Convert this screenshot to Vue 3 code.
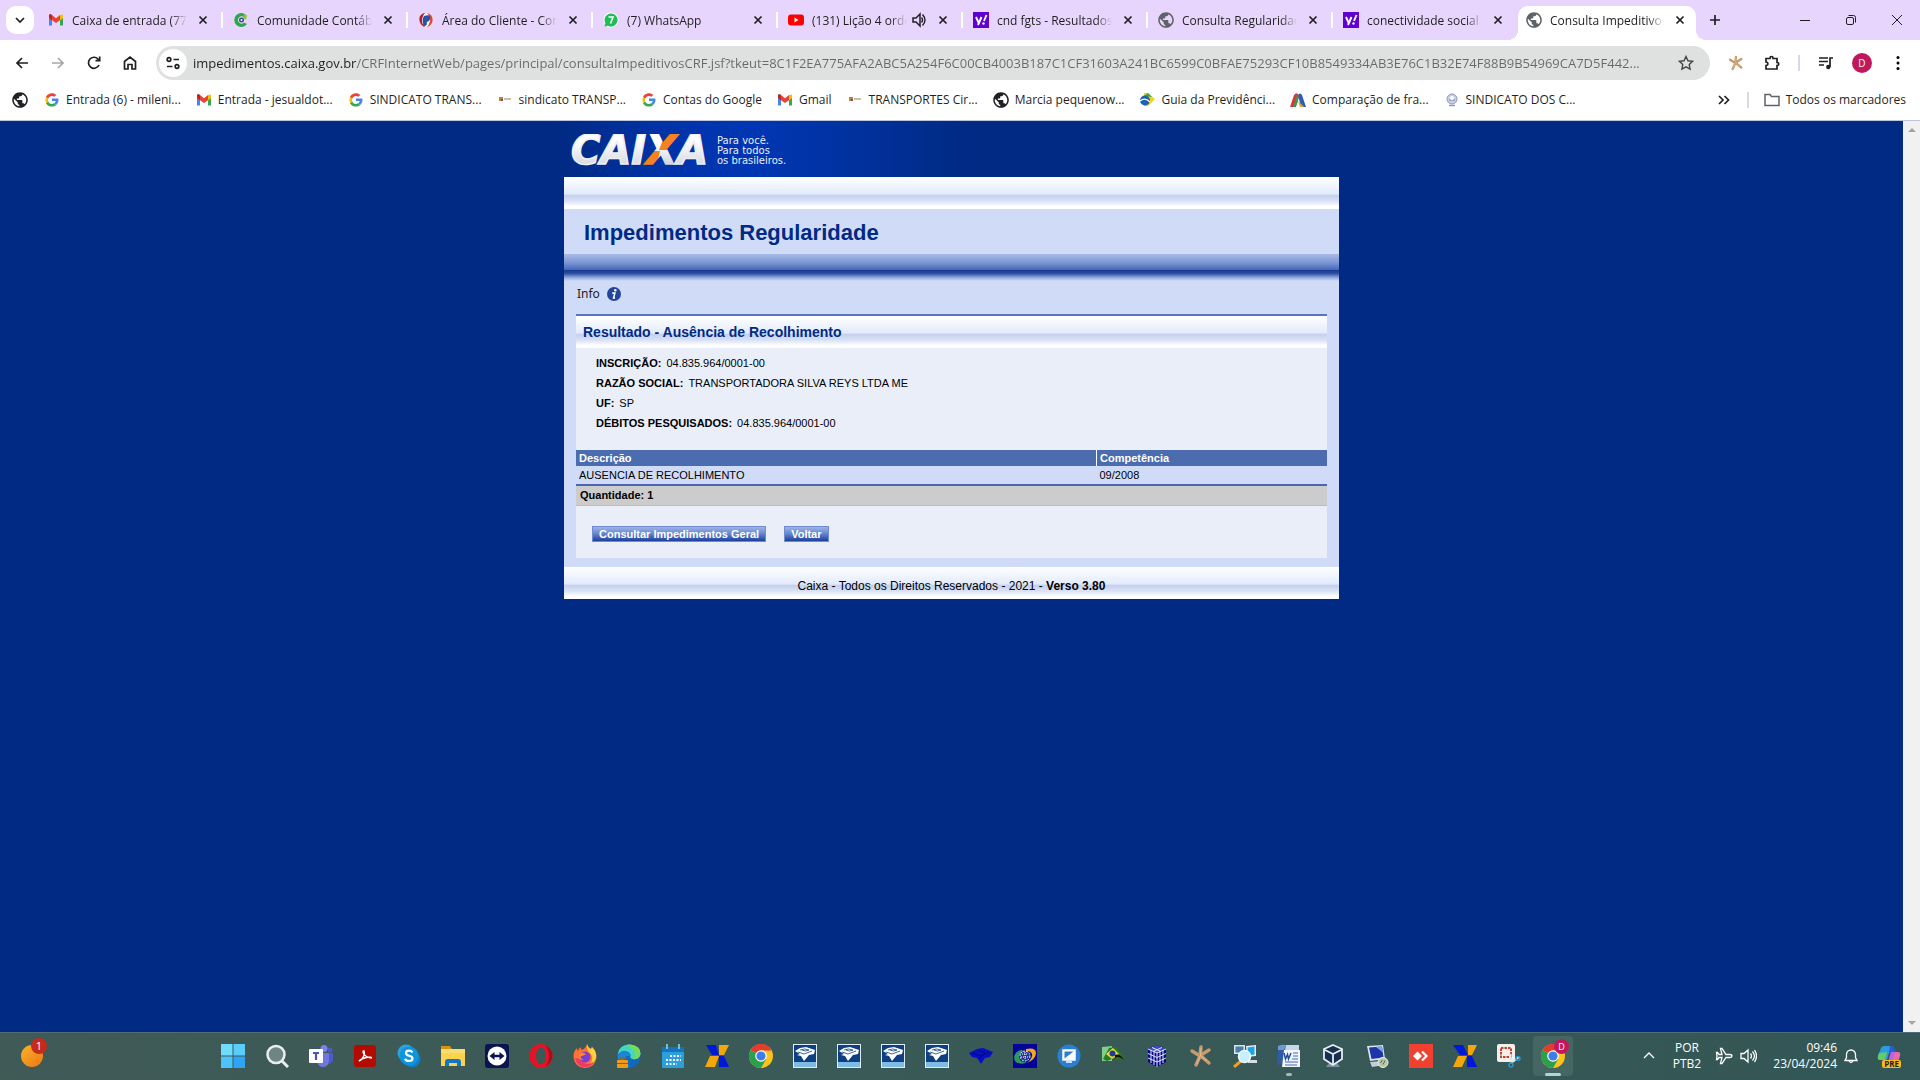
<template>
  <div class="desktop">
    <header class="browser">
      <div class="tab-strip">
        <button class="tab-search" aria-label="Pesquisar guias">
          <svg viewBox="0 0 16 16" width="16" height="16"><path d="M4 6l4 4 4-4" class="stroke" /></svg>
        </button>
        <div v-for="(tab, i) in tabs" :key="i" class="tab" :class="{ active: tab.active, last: i === 7 }">
          <svg class="favicon" viewBox="0 0 16 16" v-html="icons[tab.icon]"></svg>
          <span class="tab-title">{{ tab.title }}</span>
          <svg v-if="tab.audio" class="audio" viewBox="0 0 16 16">
            <path d="M2 6h3l4-4v12L5 10H2z" fill="none" stroke="#202124" stroke-width="1.500" />
            <path d="M10.500 5.500q2 2.500 0 5M11.500 2.500q5 5.500 0 11" fill="none" stroke="#202124" stroke-width="1.400" />
          </svg>
          <button class="tab-close" aria-label="Fechar">
            <svg viewBox="0 0 16 16" width="16" height="16"><path d="M4.500 4.500l7 7M11.500 4.500l-7 7" class="stroke" /></svg>
          </button>
        </div>
        <button class="new-tab" aria-label="Nova guia">
          <svg viewBox="0 0 16 16" width="16" height="16"><path d="M8 3v10M3 8h10" class="stroke" /></svg>
        </button>
        <div class="window-controls">
          <button aria-label="Minimizar"><svg viewBox="0 0 12 12"><path d="M1 6.500h10" class="thin" /></svg></button>
          <button aria-label="Restaurar">
            <svg viewBox="0 0 12 12"><rect x="1.500" y="3.500" width="7" height="7" rx="1.500" class="thin" /><path d="M3.500 1.500h5q2 0 2 2v5" class="thin" /></svg>
          </button>
          <button aria-label="Fechar janela"><svg viewBox="0 0 12 12"><path d="M1 1l10 10M11 1L1 11" class="thin" /></svg></button>
        </div>
      </div>

      <div class="toolbar">
        <button class="tool" aria-label="Voltar página"><svg viewBox="0 0 16 16"><path d="M14 8H3M8 3L3 8l5 5" class="stroke" /></svg></button>
        <button class="tool muted" aria-label="Avançar"><svg viewBox="0 0 16 16"><path d="M2 8h11M8 3l5 5-5 5" class="stroke" /></svg></button>
        <button class="tool" aria-label="Recarregar"><svg viewBox="0 0 16 16"><path d="M13 10a5.500 5.500 0 1 1-1-6l1.500 1.500M13.700 1.500v4.200H9.500" class="stroke" /></svg></button>
        <button class="tool" aria-label="Página inicial"><svg viewBox="0 0 16 16"><path d="M2.500 6.500L8 2l5.500 4.500V14H10V9.500H6V14H2.500z" class="stroke" /></svg></button>
        <div class="omnibox">
          <button class="site-info" aria-label="Informações do site">
            <svg viewBox="0 0 16 16" width="16" height="16">
              <circle cx="4" cy="4.500" r="1.800" class="stroke" /><path d="M8.500 4.500H14M2 11.500h5.500" class="stroke" /><circle cx="12" cy="11.500" r="1.800" class="stroke" />
            </svg>
          </button>
          <input v-model="url" class="url" type="text" aria-label="Barra de endereço" spellcheck="false" />
          <button class="star" aria-label="Favoritar">
            <svg viewBox="0 0 16 16" width="16" height="16"><path d="M8 1.500l2 4.300 4.600.500-3.400 3.200.900 4.700L8 11.900l-4.100 2.300.900-4.700L1.400 6.300 6 5.800z" fill="none" stroke="#444746" stroke-width="1.400" /></svg>
          </button>
        </div>
        <div class="extensions">
          <svg viewBox="0 0 24 24" width="20" height="16" v-html="icons.starfish"></svg>
          <button class="tool" aria-label="Extensões"><svg viewBox="0 0 16 16"><path d="M2 3.500h4V3a1.500 1.500 0 0 1 3 0v.5h4v4h.2a1.500 1.500 0 0 1 0 3H13V14H2v-3.500c2.500 0 2.500-3.500 0-3.500z" class="stroke" /></svg></button>
          <i class="divider"></i>
          <button class="tool" aria-label="Mídia"><svg viewBox="0 0 16 16"><path d="M1 3h9M1 6.500h9M1 10h5M12 12V3h3" class="stroke" /><circle cx="10.300" cy="12" r="2.200" fill="#202124" /></svg></button>
          <button class="avatar">D</button>
          <button class="tool" aria-label="Menu"><svg viewBox="0 0 16 16"><circle cx="8" cy="2.500" r="1.500" /><circle cx="8" cy="8" r="1.500" /><circle cx="8" cy="13.500" r="1.500" /></svg></button>
        </div>
      </div>

      <nav class="bookmarks">
        <a v-for="(mark, i) in bookmarks" :key="i" href="#" class="bookmark">
          <svg class="favicon" viewBox="0 0 16 16" v-html="icons[mark.icon]"></svg>
          <span v-if="mark.title">{{ mark.title }}</span>
        </a>
        <div class="bookmarks-end">
          <svg viewBox="0 0 16 16" width="16" height="16"><path d="M3 4l4 4-4 4M8.500 4l4 4-4 4" class="stroke" /></svg>
          <i class="divider"></i>
          <a href="#" class="bookmark">
            <svg class="favicon" viewBox="0 0 16 16"><path d="M1 2.500h5l1.500 2H15v9H1z" fill="none" stroke="#5f6368" stroke-width="1.500" /></svg>
            <span>Todos os marcadores</span>
          </a>
        </div>
      </nav>
    </header>

    <div class="viewport">
      <main class="page">
        <div class="brand">
          <svg class="logo" viewBox="0 0 142 34" width="142" height="34" role="img" aria-label="CAIXA">
            <defs>
              <linearGradient id="silver" x1="0" y1="0" x2="0" y2="1">
                <stop offset="0.300" stop-color="#fff" /><stop offset="1" stop-color="#c9cdd6" />
              </linearGradient>
              <!-- the X has its rising stroke in orange -->
              <pattern id="cross" width="142" height="34" patternUnits="userSpaceOnUse">
                <rect width="142" height="34" fill="url(#silver)" />
                <path d="M95 0h30v16H89zM60 17h30L86 34H60z" fill="#f58220" />
              </pattern>
            </defs>
            <text x="1" y="30" class="wordmark">CAI<tspan class="cross">X</tspan>A</text>
          </svg>
          <p class="slogan">Para você.<br />Para todos<br />os brasileiros.</p>
        </div>

        <div class="card">
          <div class="gloss"></div>
          <h1>Impedimentos Regularidade</h1>
          <div class="bar"></div>

          <div class="info">
            <span>Info</span>
            <svg viewBox="0 0 16 16" width="14" height="14">
              <circle cx="8" cy="8" r="8" fill="#23459b" /><circle cx="9.500" cy="3.800" r="1.400" fill="#fff" />
              <path d="M6 7h3l-1.500 5.500h1.700" fill="none" stroke="#fff" stroke-width="1.800" />
            </svg>
          </div>

          <section class="result">
            <h2 class="gloss">Resultado - Ausência de Recolhimento</h2>
            <dl>
              <div v-for="field in fields" :key="field.label">
                <dt>{{ field.label }}:</dt>
                <dd>{{ field.value }}</dd>
              </div>
            </dl>
            <table>
              <thead>
                <tr><th>Descrição</th><th class="period">Competência</th></tr>
              </thead>
              <tbody>
                <tr v-for="row in rows" :key="row.period"><td>{{ row.description }}</td><td>{{ row.period }}</td></tr>
              </tbody>
              <tfoot>
                <tr><td colspan="2">Quantidade: {{ rows.length }}</td></tr>
              </tfoot>
            </table>
            <div class="actions">
              <button>Consultar Impedimentos Geral</button>
              <button>Voltar</button>
            </div>
          </section>

          <footer class="gloss">Caixa - Todos os Direitos Reservados - 2021 -&nbsp;<b>Verso 3.80</b></footer>
        </div>
      </main>
      <div class="scrollbar">
        <svg viewBox="0 0 8 8" width="8" height="8"><path d="M0 6l4-4 4 4z" fill="#a3a3a3" /></svg>
        <svg viewBox="0 0 8 8" width="8" height="8"><path d="M0 2l4 4 4-4z" fill="#a3a3a3" /></svg>
      </div>
    </div>

    <div class="taskbar">
      <button class="weather" aria-label="Clima">
        <svg viewBox="0 0 24 24" width="24" height="24"><circle cx="12" cy="12" r="11" fill="url(#sun)" /><defs><linearGradient id="sun" x1="0" y1="0" x2="1" y2="1"><stop offset="0" stop-color="#f9b527" /><stop offset="1" stop-color="#ee7418" /></linearGradient></defs></svg>
        <span class="badge">1</span>
      </button>
      <div class="apps">
        <button v-for="(app, i) in apps" :key="i" class="app" :class="{ running: i === 24, current: i === apps.length - 1 }" :aria-label="app">
          <svg viewBox="0 0 24 24" width="24" height="24" v-html="icons[app]"></svg>
          <span v-if="i === apps.length - 1" class="profile">D</span>
        </button>
      </div>
      <div class="tray">
        <svg viewBox="0 0 16 16" width="16" height="16"><path d="M3 10l5-5 5 5" class="light" /></svg>
        <span class="language">POR<br />PTB2</span>
        <svg viewBox="0 0 18 18" width="18" height="18"><path d="M17 9q0-1.500-2-1.500h-4L7 1.500H5.500L7 7.500H4L2.500 5.500h-1L2 9l-.500 3.500h1L4 10.500h3L5.500 16.500H7l4-6h4q2 0 2-1.500z" class="light" /></svg>
        <svg viewBox="0 0 18 18" width="18" height="18"><path d="M2 6.500h3l4-3.500v12l-4-3.500H2zM11.500 6.500q2 2.500 0 5M13.500 4.500q4 4.500 0 9M15.500 3q4 6 0 12" class="light" /></svg>
        <time>09:46<br />23/04/2024</time>
        <svg viewBox="0 0 16 16" width="16" height="16"><path d="M2 12.500h12l-1.500-3V6.500a4.500 4.500 0 0 0-9 0v3zM6 13q2 3 4 0" class="light" /></svg>
        <div class="copilot">
          <svg viewBox="0 0 24 24" width="24" height="24" v-html="icons.copilot"></svg>
          <span>PRE</span>
        </div>
      </div>
    </div>
  </div>
</template>

<script setup>
import { ref } from 'vue'

const url = ref(
  'impedimentos.caixa.gov.br/CRFInternetWeb/pages/principal/consultaImpeditivosCRF.jsf?tkeut=8C1F2EA775AFA2ABC5A254F6C00CB4003B187C1CF31603A241BC6599C0BFAE75293CF10B8549334AB3E76C1B32E74F88B9B54969CA7D5F442...'
)

const tabs = [
  { icon: 'gmail', title: 'Caixa de entrada (77' },
  { icon: 'contabil', title: 'Comunidade Contábi' },
  { icon: 'cliente', title: 'Área do Cliente - Con' },
  { icon: 'whatsapp', title: '(7) WhatsApp' },
  { icon: 'youtube', title: '(131) Lição 4 orde', audio: true },
  { icon: 'yahoo', title: 'cnd fgts - Resultados' },
  { icon: 'globeGrey', title: 'Consulta Regularidad' },
  { icon: 'yahoo', title: 'conectividade social' },
  { icon: 'globeGrey', title: 'Consulta Impeditivos', active: true }
]

const bookmarks = [
  { icon: 'globe' },
  { icon: 'google', title: 'Entrada (6) - mileni...' },
  { icon: 'gmail', title: 'Entrada - jesualdot...' },
  { icon: 'google', title: 'SINDICATO TRANS...' },
  { icon: 'strip', title: 'sindicato TRANSP...' },
  { icon: 'google', title: 'Contas do Google' },
  { icon: 'gmail', title: 'Gmail' },
  { icon: 'strip', title: 'TRANSPORTES Cir...' },
  { icon: 'globe', title: 'Marcia pequenow...' },
  { icon: 'guia', title: 'Guia da Previdênci...' },
  { icon: 'compare', title: 'Comparação de fra...' },
  { icon: 'union', title: 'SINDICATO DOS C...' }
]

const fields = [
  { label: 'INSCRIÇÃO', value: '04.835.964/0001-00' },
  { label: 'RAZÃO SOCIAL', value: 'TRANSPORTADORA SILVA REYS LTDA ME' },
  { label: 'UF', value: 'SP' },
  { label: 'DÉBITOS PESQUISADOS', value: '04.835.964/0001-00' }
]

const rows = [{ description: 'AUSENCIA DE RECOLHIMENTO', period: '09/2008' }]

const apps = [
  'windows', 'search', 'teams', 'acrobat', 'skype', 'folder', 'teamviewer', 'opera', 'firefox', 'edge',
  'calendar', 'caixa', 'chrome', 'receita', 'receita', 'receita', 'receita', 'eagle', 'sped', 'remote',
  'brazil', 'cube', 'starfish', 'network', 'word', 'virtualbox', 'putty', 'anydesk', 'caixaAlt', 'snip', 'chrome'
]

const globePath = (color) =>
  `<path transform="scale(.78) translate(-1.700 -1.700)" fill="${color}" d="M12 2C6.480 2 2 6.480 2 12s4.480 10 10 10 10-4.480 10-10S17.520 2 12 2zm-1 17.930c-3.950-.490-7-3.850-7-7.930 0-.620.080-1.210.210-1.790L9 15v1c0 1.100.900 2 2 2v1.930zm6.900-2.540c-.260-.810-1-1.390-1.900-1.390h-1v-3c0-.550-.450-1-1-1H8v-2h2c.550 0 1-.450 1-1V7h2c1.100 0 2-.900 2-2v-.410c2.930 1.190 5 4.060 5 7.410 0 2.080-.800 3.970-2.100 5.390z"/>`

const icons = {
  gmail:
    '<path d="M1 3.500v10h3V7z" fill="#4285f4"/><path d="M15 3.500v10h-3V7z" fill="#34a853"/><path d="M12 3l3-.500V6l-3 2.500z" fill="#fbbc04"/><path d="M4 3l4 3.200L12 3v5.200L8 11 4 8.200z" fill="#ea4335"/><path d="M1 3q1-2 3 0v5.200L1 6z" fill="#c5221f"/>',
  google:
    '<path d="M8 6.600h6.400q.600 4-2.200 6.300l-2.100-1.600q1.400-1 1.700-2.200H8z" fill="#4285f4"/><path d="M12.200 12.900C9 15.800 4 14.800 2 11.200L4.200 9.500c1.100 2.600 3.700 3.100 5.900 1.800z" fill="#34a853"/><path d="M2 11.200Q.700 8 2 4.900L4.200 6.600q-.500 1.400 0 2.900z" fill="#fbbc05"/><path d="M2 4.900C4 1 9 .200 12.300 2.900L10.400 4.800C8 3.300 5.200 4 4.200 6.600z" fill="#ea4335"/>',
  contabil:
    '<path d="M14 4a7 7 0 1 0 0 8l-3-1.500a3.500 3.500 0 1 1 0-5z" fill="#2ba84a"/><path d="M14 4L11 2l-1 4 3 2z" fill="#8cc63f"/><circle cx="8.500" cy="8" r="2.500" fill="#3b4a9b"/><circle cx="8.500" cy="8" r="1" fill="#fff"/>',
  cliente:
    '<circle cx="8" cy="8" r="6.500" fill="#fff"/><path d="M7 1C-1 2 0 13 7 15 3 11 3 6 7 1z" fill="#b3202a"/><path d="M9 1c8 2 7 12 0 14 4-5 4-10 0-14z" fill="#e8482a"/><path d="M6 4c6-2 8 1 5 5-2 1-3 1-2 3 0 1-3 3-4 2 1-4-2-5 1-10z" fill="#2355a8"/>',
  whatsapp:
    '<circle cx="8" cy="8" r="7.500" fill="#fff"/><path d="M8 1.500a6.500 6.500 0 1 1-3 12.200L1.500 14.500l.900-3.300A6.500 6.500 0 0 1 8 1.500z" fill="#1fbd55"/><path d="M5.500 5H10L7.500 11.500" fill="none" stroke="#fff" stroke-width="1.600"/>',
  youtube: '<rect x="0" y="2.500" width="16" height="11" rx="3" fill="#f00"/><path d="M6.500 5.500v5l4-2.500z" fill="#fff"/>',
  yahoo:
    '<rect width="16" height="16" fill="#5f01d1"/><path d="M3 5l2.500 5.500M8.500 5l-3.500 8M11 9l2.500-6" fill="none" stroke="#fff" stroke-width="1.900"/><circle cx="10.500" cy="11.500" r="1.200" fill="#fff"/>',
  globe: globePath('#202124'),
  globeGrey: globePath('#5f6368'),
  strip: '<path d="M2 5h4v4H2z" fill="#b8862e"/><path d="M4 7h2v2H4z" fill="#7a4a7a"/><path d="M7 6h7v2H7z" fill="#cbbcb4"/>',
  guia: '<path d="M5 1h4l7 6-7 7H5z" fill="#f2d21b"/><path d="M5 4l4-3 4 4z" fill="#3aa648"/><circle cx="6" cy="8.500" r="5" fill="#1e63b0"/><path d="M1 9q5-4 10 1" fill="none" stroke="#fff" stroke-width="1.200"/>',
  compare:
    '<path d="M0 15L4 3q3-4 5 1L6 15z" fill="#d83a3a"/><path d="M3 15L7 4l2 1-2 7-2 3z" fill="#2e9e5b"/><path d="M8 3q2-3 4 0l4 12h-5z" fill="#2e5fb0"/><path d="M8 9l2 6h4z" fill="#e9a13b"/>',
  union: '<circle cx="8" cy="7" r="5" fill="#c9cfe6" stroke="#8f98c0"/><path d="M5 13.500h6M5 8h6" stroke="#8f98c0" stroke-width="1.500"/><circle cx="8" cy="6" r="2" fill="#fff"/>',

  windows: '<path d="M0 0h11.500v11.500H0z" fill="#6fdcff"/><path d="M12.500 0H24v11.500H12.500z" fill="#5bcdfb"/><path d="M0 12.500h11.500V24H0z" fill="#4cc3fa"/><path d="M12.500 12.500H24V24H12.500z" fill="#2fa4f3"/>',
  search: '<circle cx="11" cy="10.500" r="8.500" fill="#6f8583" stroke="#e9eeee" stroke-width="2.500"/><path d="M17 17l6 6" stroke="#e9eeee" stroke-width="3"/>',
  teams:
    '<circle cx="15" cy="4.500" r="3.500" fill="#7b83eb"/><circle cx="21" cy="6" r="2.500" fill="#5059c9"/><path d="M17 9h7v7q-1 4-5 4z" fill="#5059c9"/><path d="M8 9h12v8q-1 6-6 6t-6-6z" fill="#6e76df"/><rect y="5" width="14" height="14" rx="1" fill="#fff"/><path d="M4 9h6M7 9v7" stroke="#4b53bc" stroke-width="2.200"/>',
  acrobat: '<rect x="1" y="1" width="22" height="22" rx="3" fill="#b30b00"/><path d="M6 17c5-2 6-8 5-10-2-1-1 6 7 7 2-1-7-2-12 3z" fill="none" stroke="#fff" stroke-width="1.500"/>',
  skype: '<circle cx="9" cy="9" r="8.500" fill="#2aa5e0"/><circle cx="15" cy="15" r="8.500" fill="#0b7fcb"/><circle cx="12" cy="12" r="9.500" fill="#0f95db"/><path d="M15.500 8.500q-1-1.800-3.500-1.800-3 0-3 2.300 0 2 3 2.700 3.500.800 3.500 2.800 0 2.500-3.500 2.500-3 0-4-2.200" fill="none" stroke="#fff" stroke-width="2.200"/>',
  folder: '<path d="M0 2h9l2 3v4H0z" fill="#d9930b"/><path d="M0 5h24v17H0z" fill="#fcd34f"/><path d="M0 5h24v4H0z" fill="#fbdc6e"/><path d="M4 22v-4q0-3 3-3h10q3 0 3 3v4h-4v-3H8v3z" fill="#1176c6"/>',
  teamviewer: '<rect width="24" height="24" rx="3" fill="#0a1450"/><circle cx="12" cy="12" r="9.500" fill="#fff"/><path d="M4.500 12l5-4v2.800h5V8l5 4-5 4v-2.800h-5V16z" fill="#0a1450"/>',
  opera: '<ellipse cx="12" cy="12" rx="11.500" ry="12" fill="#e81224"/><ellipse cx="12" cy="12" rx="5" ry="8.500" fill="#3a5a57"/><path d="M16 1.500Q24 5 23.500 12T16 22.500q4-4 4-10.500t-4-10.500z" fill="#a50f1c"/>',
  firefox:
    '<path d="M14 0q1 4 4 5l1-2q5 5 4.500 10.500Q22 24 12 24T.500 13Q.500 7 4 4l.500 3 3-4 1 3q4-1 5.500-6z" fill="#ff7139"/><path d="M14 0q1 4 4 5l1-2q5 5 4 11-2 5-6 6 4-5 1-10-5-4-4-10z" fill="#ffd23c"/><path d="M2 14q2 9 10 9 6 0 9-5-9 5-14-3z" fill="#f0386b"/><circle cx="12" cy="13" r="5.500" fill="#7a3fd0"/><path d="M6 10q3-3 7 0-2 2-5 2-1 3 3 4-6 1-5-6z" fill="#ff8a2a"/>',
  edge:
    '<circle cx="12" cy="12" r="11.500" fill="#1069bc"/><path d="M.500 11Q2 0 13 .500 24 2 23.500 10q-1 6-8 5-3-1-2-3 0-4-5-5-5 0-8 4z" fill="#45d6c0"/><path d="M9 12q-2 8 5 11-12 0-13.500-11 3-6 8-5 5 1 5 5z" fill="#1a86d6"/><path d="M13 .500q11 1 10.500 9.500-1 6-8 5 4-3 2-7T9 1z" fill="#74dc5a"/><rect y="16" width="11" height="8" rx="1" fill="#f09a1a"/><path d="M3.500 16v-2h4v2M0 19.500h11" fill="none" stroke="#9c5b0a"/>',
  calendar: '<rect x="1" y="3" width="22" height="21" rx="1" fill="#2ba0de"/><path d="M1 3h22v5H1z" fill="#1477bb"/><path d="M6 0v5M18 0v5" stroke="#7cc8f0" stroke-width="1.800"/><path d="M9 12h11M5 16h15M5 20h11" stroke="#fff" stroke-width="2" stroke-dasharray="2 1.500"/>',
  caixa: '<path d="M1 1h10l3 10H7z" fill="#0018d8"/><path d="M14 1h10l-5 10h-5z" fill="#f5a60c"/><path d="M5 12h9L10 23H0z" fill="#f5a60c"/><path d="M14 12h5l5 11H14z" fill="#0018d8"/>',
  caixaAlt: '<path d="M0 1h10l5 10H7z" fill="#0018d8"/><path d="M15 1h9l-5 10h-4z" fill="#f5a60c"/><path d="M5 12h9L9 23H0z" fill="#f5a60c"/><path d="M14 12h5l5 11H14z" fill="#0018d8"/>',
  chrome:
    '<circle cx="12" cy="12" r="12" fill="#fcc31e"/><path d="M12 12L1.600 6A12 12 0 0 1 22.400 6H12z" fill="#e33b2e"/><path d="M12 12L1.600 6A12 12 0 0 0 12 24l5.200-9z" fill="#2c9f4b"/><path d="M12 6.500h10.600L17 15z" fill="#fcc31e"/><path d="M1.600 6A12 12 0 0 1 22.400 6.500H12z" fill="#e33b2e"/><circle cx="12" cy="12" r="5.800" fill="#fff"/><circle cx="12" cy="12" r="4.600" fill="#3b7de9"/>',
  receita:
    '<rect width="24" height="24" fill="#dcebf5"/><path d="M1 18h22v5H1z" fill="#7fbbe2"/><rect x="1" y="1" width="22" height="17" fill="#0d3f82"/><path d="M2 7l5-3 6-1 9 3-1 4-5 1-5 6-3-5-4-1 3-1z" fill="#fff"/><path d="M7 6q5-2 9 0-4 2-7 0M5 8l6 2 8-3" fill="none" stroke="#0d3f82" stroke-width=".8"/>',
  eagle: '<path d="M0 9l8-4 6-1 10 4-3 5-5 1-4 6-4-6-5-1z" fill="#0510c4"/><path d="M3 9l8 3 9-4M10 6l6 3-6 6" fill="none" stroke="#050a6a"/>',
  sped:
    '<rect width="24" height="24" fill="#04049a"/><path d="M8 6C0 8-1 17 5 19q5 2 9-1-7 1-8-5 0-3 5-6z" fill="#2c9a5c"/><path d="M13 5q10-2 10 4t-9 10q6-5 5-9-1-3-6-3z" fill="#f5a61a"/><circle cx="12" cy="12" r="5" fill="#23369c" stroke="#fff" stroke-dasharray="2 1"/><path d="M9 10h6M8 13h8M12 8v8" stroke="#fff" stroke-dasharray="1 1"/>',
  remote: '<circle cx="12" cy="12" r="11.500" fill="#2a7fd0"/><path d="M6 6h12v10H6zM9 18h6" fill="#fff" stroke="#fff" stroke-width="1.500"/><path d="M7.500 14.500V7.500h9z" fill="#2a7fd0"/>',
  brazil: '<path d="M1 3l10-1v15H1z" fill="#7fcf8c"/><path d="M8 4l7-1 9 12-3 1-8-2-7 3-4-2z" fill="#2b7b22"/><path d="M5 10l7-6 6 6-7 5z" fill="#ebdc2c"/><circle cx="11.500" cy="9.500" r="3" fill="#2238a0"/><path d="M14 11q5-2 9 5-6-5-9-2z" fill="#111"/>',
  cube: '<path d="M12 1l9 4v13l-9 5-9-5V5z" fill="#070780"/><path d="M3 5l9-4 9 4-9 4z" fill="#3a4bc8"/><path d="M3 5l9 4 9-4M12 9v14M3 9.500l9 4 9-4M3 14l9 4 9-4M7 3.500l9 4M17 3.500l-9 4M6 6v13M9 7v14M15 7v14M18 6v13" fill="none" stroke="#dfe6ff"/>',
  starfish: '<path d="M11 12L12 3M12 11l8-5M12 12l8 7M11 12L7 21M11 12L3 7" stroke="#c79a6e" stroke-width="3.500" stroke-linecap="round"/><path d="M11.500 12L12 4M12 12l6 5M11 12l-3 8" stroke="#e0bb92" stroke-width="1"/>',
  network:
    '<rect x="1" y="1" width="11" height="9" fill="#d8e2ec"/><rect x="2.500" y="2.500" width="8" height="6" fill="#467fae"/><path d="M13 2l10-1v11l-9 1z" fill="#e3edf5"/><path d="M14.500 3.500l7-1v8l-6 1z" fill="#20a2e8"/><path d="M15 16h9v3h-9z" fill="#d7dde2"/><path d="M8 17l-7 6" stroke="#e8a027" stroke-width="3"/><circle cx="11.500" cy="12.500" r="6" fill="#c6efff" stroke="#effaff" stroke-width="1.500"/>',
  word: '<path d="M4 1h18v5H4z" fill="#c5d5ec"/><path d="M1 6l4-5h4L5 20l-5 1z" fill="#315ca4"/><path d="M7 6h16v17H5z" fill="#f2f6fc"/><path d="M16 9h5M16 12h5M15 15h6M8 18h13M8 21h12" stroke="#4169af"/><path d="M7 9l1.500 6 2-4.500 1 4.500L14 9" fill="none" stroke="#24509d" stroke-width="1.500"/><path d="M1 2q4-2 8-1L7 6H1z" fill="#7198ce"/>',
  virtualbox: '<path d="M8 19h8l3 4H5z" fill="#7b8fa0"/><path d="M12 1l9 4v10l-9 6-9-6V5z" fill="#17304f" stroke="#e5edf3" stroke-width="1.800"/><path d="M3 5.500l9 4.500 9-4.500M12 10v11" fill="none" stroke="#e5edf3" stroke-width="1.800"/>',
  putty: '<path d="M2 2l16-1 2 14-15 2z" fill="#dce3ec"/><path d="M4 3.500l13-1 1.500 11-12 1.500z" fill="#1d35a7"/><path d="M11 3l6-.500 1 6z" fill="#7da2e8"/><path d="M5 18l13-1 2 4-13 2z" fill="#c4ccd5"/><circle cx="18" cy="18.500" r="5" fill="#b7c7a8" stroke="#eef1e8"/><path d="M15.500 19l2-3M18 20.500l2-4" stroke="#566a4a"/>',
  anydesk: '<rect width="24" height="24" fill="#f0402f"/><path d="M4 12l4.500-4.500L13 12l-4.500 4.500z" fill="#fff"/><path d="M13 7.500l4.500 4.500-4.500 4.500" fill="none" stroke="#fff" stroke-width="2.200"/>',
  snip: '<rect width="18" height="18" rx="2" fill="#f3efec"/><path d="M4 4h10v9H4z" fill="none" stroke="#c6402a" stroke-width="2" stroke-dasharray="2.500 1"/><path d="M13 10l2 9M22 13l-8 6" stroke="#dce6ec" stroke-width="2"/><circle cx="14" cy="21" r="2" fill="none" stroke="#2992c8" stroke-width="1.600"/><circle cx="21" cy="14.500" r="2" fill="none" stroke="#2992c8" stroke-width="1.600"/>',
  copilot: '<path d="M7 2h7l-4 14H3q-3 0-2-4L4 4q1-2 3-2z" fill="#299ddf"/><path d="M2 9l8-1-2 8H3q-3 0-2-4z" fill="#66c96b"/><path d="M13 2h2q2 0 3 4l1 2-7 1z" fill="#2b5dcf"/><path d="M14 8h7q3 0 2 4l-3 9h-8z" fill="#e76ba6"/><path d="M14 8l-4 13h4l4-13z" fill="#b565e3"/>'
}
</script>

<style>
body {
  margin: 0;
}
</style>

<style scoped>
.desktop {
  display: flex;
  flex-direction: column;
  min-height: 100vh;
  font-family: 'Open Sans', 'Noto Sans', sans-serif;
  font-size: 12px;
  color: #1f1f1f;
}

button {
  border: 0;
  padding: 0;
  background: none;
  font-family: inherit;
  color: inherit;
  display: flex;
  align-items: center;
  justify-content: center;
}

svg {
  display: block;
  flex-shrink: 0;
}

.stroke {
  fill: none;
  stroke: currentColor;
  stroke-width: 1.7;
}

.thin {
  fill: none;
  stroke: #1f1f1f;
  stroke-width: 1;
}

.light {
  fill: none;
  stroke: #fff;
  stroke-width: 1.3;
}

.favicon {
  width: 16px;
  height: 16px;
}

.divider {
  width: 2px;
  height: 16px;
  background: #dcd6ea;
}

/* tab strip */
.tab-strip {
  display: flex;
  align-items: center;
  height: 40px;
  background: #e8d5fd;
}

.tab-search {
  width: 28px;
  height: 28px;
  margin: 0 4px 0 6px;
  border-radius: 10px;
  background: #fff;
}

.tab {
  display: flex;
  align-items: center;
  box-sizing: border-box;
  width: 185px;
  height: 34px;
  padding: 0 12px 0 10px;
  position: relative;
}

.tab::after {
  content: '';
  position: absolute;
  right: 0;
  width: 2px;
  height: 16px;
  background: #fff;
}

.tab.last::after {
  display: none;
}

.tab.active {
  align-self: flex-end;
  width: 178px;
  padding: 0 8px 6px;
  background: #fff;
  border-radius: 10px 10px 0 0;
}

.tab.active::before,
.tab.active::after {
  content: '';
  position: absolute;
  right: auto;
  bottom: 0;
  left: -10px;
  width: 10px;
  height: 10px;
  background: radial-gradient(circle at 0 0, #e8d5fd 10px, #fff 10px);
}

.tab.active::after {
  right: -10px;
  left: auto;
  background: radial-gradient(circle at 100% 0, #e8d5fd 10px, #fff 10px);
}

.tab-title {
  flex: 1;
  min-width: 0;
  margin-left: 8px;
  overflow: hidden;
  white-space: nowrap;
  mask-image: linear-gradient(to left, transparent, #000 16px);
}

.audio {
  width: 16px;
  height: 16px;
  margin-left: 4px;
}

.tab-close {
  width: 16px;
  height: 16px;
  margin-left: 8px;
}

.new-tab {
  width: 28px;
  height: 28px;
  margin-left: 5px;
}

.window-controls {
  display: flex;
  margin-left: auto;
}

.window-controls button {
  width: 46px;
  height: 40px;
}

.window-controls svg {
  width: 12px;
  height: 12px;
}

/* address bar */
.toolbar {
  display: flex;
  align-items: center;
  height: 46px;
  padding: 0 4px;
}

.tool {
  width: 36px;
  height: 36px;
}

.tool svg {
  width: 16px;
  height: 16px;
}

.muted {
  color: #a5a7a9;
}

.omnibox {
  display: flex;
  align-items: center;
  flex: 1;
  height: 34px;
  margin-left: 8px;
  padding: 0 16px 0 3px;
  border-radius: 17px;
  background: #dfe1e0;
}

.site-info {
  width: 28px;
  height: 28px;
  border-radius: 14px;
  background: #fff;
}

.url {
  flex: 1;
  min-width: 0;
  margin: 0 8px 0 6px;
  padding: 0;
  border: 0;
  outline: 0;
  font-family: 'Open Sans', 'Noto Sans', sans-serif;
  font-size: 13px;
  /* the host part is darker than the path */
  color: transparent;
  background: linear-gradient(to right, #1f1f1f 164px, #66696b 164px);
  background-clip: text;
}

.extensions {
  display: flex;
  align-items: center;
  margin-left: 16px;
}

.extensions .tool:nth-child(2) {
  margin: 0 8px;
}

.extensions .divider {
  margin-right: 8px;
}

.avatar {
  width: 20px;
  height: 20px;
  margin: 0 8px;
  border-radius: 10px;
  background: #c2185b;
  color: #fff;
  font-size: 10px;
}

/* bookmarks */
.bookmarks {
  display: flex;
  align-items: center;
  height: 27px;
  padding: 0 14px 7px 12px;
  border-bottom: 1px solid #b9c6dd;
}

.bookmark {
  display: flex;
  align-items: center;
  gap: 6px;
  margin-right: 16px;
  color: #1f1f1f;
  text-decoration: none;
  white-space: nowrap;
}

.bookmarks > .bookmark + .bookmark {
  margin-right: 15px;
}

.bookmarks-end {
  display: flex;
  align-items: center;
  gap: 15px;
  margin-left: auto;
}

.bookmarks-end .bookmark {
  margin-right: 0;
}

/* page */
.viewport {
  display: flex;
  flex: 1;
  background: #002a84;
}

.page {
  flex: 1;
  font-family: 'Liberation Sans', Arial, sans-serif;
  font-size: 11px;
  color: #000;
}

.scrollbar {
  display: flex;
  flex-direction: column;
  align-items: center;
  justify-content: space-between;
  width: 17px;
  padding: 5px 0;
  box-sizing: border-box;
  background: #f1f1f1;
}

.brand {
  display: flex;
  align-items: center;
  box-sizing: border-box;
  max-width: 775px;
  height: 56px;
  margin: 0 auto;
  padding: 4px 6px 0;
  background: linear-gradient(to right, #002a84, #0033a8 100px, #0036b4 190px, #0032a0 280px, #002a84 400px);
}

.wordmark {
  font-family: 'DejaVu Sans', sans-serif;
  font-size: 40px;
  font-style: italic;
  font-weight: bold;
  fill: url(#silver);
  stroke: #eceef2;
  stroke-width: 1.5px;
}

.cross {
  fill: url(#cross);
  stroke: url(#cross);
}

.slogan {
  margin: 0 0 0 5px;
  font-family: 'DejaVu Sans', sans-serif;
  font-size: 10px;
  line-height: 10px;
  color: #e8eefc;
}

.card {
  max-width: 775px;
  margin: 0 auto;
  background: #d0dcf7;
}

.gloss {
  height: 32px;
  background: linear-gradient(#fff, #e2eafb 54%, #c3d0ed 56%, #d8e1f5 75%, #fff 92%);
}

h1 {
  margin: 0;
  padding: 2px 0 0 20px;
  font-size: 22px;
  line-height: 43px;
  color: #002a84;
}

.bar {
  height: 27px;
  background: linear-gradient(#a9bbe6, #7f99d6 30%, #4a6db9 57%, #1b3b94 61%, #2c4ea4 72%, #8ba3da 86%, #d0dcf7);
}

.info {
  display: flex;
  align-items: center;
  gap: 7px;
  height: 25px;
  padding: 0 13px 8px;
  font-family: 'Noto Sans', sans-serif;
  font-size: 12px;
  color: #222;
}

.result {
  margin: 0 12px 9px;
  border-top: 2px solid #5b74c0;
  background: #e9eef9;
}

h2 {
  margin: 0;
  padding-left: 7px;
  font-size: 14px;
  line-height: 32px;
  color: #002a84;
}

dl {
  margin: 0;
  padding: 5px 20px 17px;
}

dl div {
  display: flex;
  gap: 5px;
  line-height: 20px;
}

dt {
  font-weight: bold;
}

dd {
  margin: 0;
}

table {
  width: 100%;
  border-collapse: collapse;
}

th,
td {
  padding: 0 3px;
  line-height: 16px;
  text-align: left;
}

th {
  background: #4b6cae;
  color: #fff;
}

.period {
  width: 224px;
  border-left: 1px solid #fff;
}

tbody td {
  background: #d0dcf7;
  line-height: 18px;
}

tfoot td {
  border-top: 2px solid #4b66b4;
  border-bottom: 1px solid #bdbdbd;
  padding-left: 4px;
  background: #ccc;
  font-weight: bold;
  line-height: 19px;
}

.actions {
  display: flex;
  gap: 18px;
  padding: 20px 16px 16px;
}

.actions button {
  height: 16px;
  padding: 0 6px;
  border: 1px solid #6f8cd0;
  background: linear-gradient(#9db4e8, #6384cd 50%, #1c3f9e);
  color: #fff;
  font-size: 11px;
  font-weight: bold;
}

footer {
  display: flex;
  align-items: center;
  justify-content: center;
  padding-top: 5px;
  box-sizing: border-box;
  font-size: 12px;
}

/* taskbar */
.taskbar {
  display: flex;
  align-items: center;
  height: 48px;
  padding-bottom: 2px;
  border-top: 1px solid #4f6d77;
  box-sizing: border-box;
  background: linear-gradient(to right, #405a56, #3a5a57 40%, #335756);
  color: #fff;
}

.weather {
  position: relative;
  width: 40px;
  height: 40px;
  margin: 0 160px 0 12px;
}

.badge {
  position: absolute;
  top: 2px;
  left: 19px;
  width: 16px;
  height: 16px;
  border-radius: 8px;
  background: #c42b1c;
  color: #fff;
  font-size: 11px;
  line-height: 16px;
}

.apps {
  display: flex;
  gap: 4px;
  padding-left: 1px;
}

.app {
  position: relative;
  width: 40px;
  height: 40px;
  border-radius: 4px;
}

.current {
  background: #466663;
}

.running::after,
.current::after {
  content: '';
  position: absolute;
  bottom: 0;
  left: 17px;
  width: 6px;
  height: 3px;
  border-radius: 2px;
  background: #a9b8b6;
}

.current::after {
  left: 12px;
  width: 16px;
  background: #b5d3d8;
}

.profile {
  position: absolute;
  top: 3px;
  right: 4px;
  width: 15px;
  height: 15px;
  border-radius: 8px;
  background: #c2185b;
  color: #fff;
  font-size: 9px;
  line-height: 15px;
}

.tray {
  display: flex;
  align-items: center;
  gap: 6px;
  margin-left: auto;
  padding-right: 19px;
  line-height: 16px;
}

.language {
  width: 32px;
  margin: 0 6px 0 8px;
  text-align: center;
}

time {
  width: 64px;
  margin-left: 10px;
  text-align: right;
}

.copilot {
  position: relative;
  margin-left: 12px;
}

.copilot span {
  position: absolute;
  right: 0;
  bottom: 0;
  padding: 0 2px;
  border-radius: 2px;
  background: #fbb917;
  color: #222;
  font-size: 8px;
  font-weight: bold;
  line-height: 8px;
}
</style>
